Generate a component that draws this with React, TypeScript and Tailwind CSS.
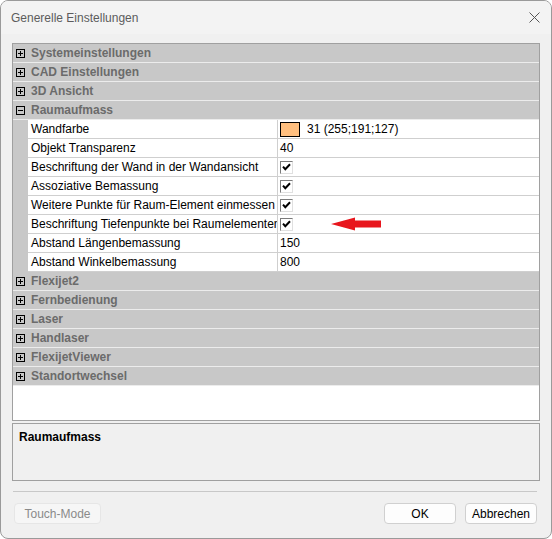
import React from "react";

const font = { fontFamily: '"Liberation Sans", Arial, sans-serif' };

function Toggle({ open }: { open?: boolean }) {
  return (
    <svg width="9" height="9" viewBox="0 0 9 9" className="shrink-0">
      <rect x="0.5" y="0.5" width="8" height="8" fill="none" stroke="#000" />
      <line x1="2" y1="4.5" x2="7" y2="4.5" stroke="#000" />
      {!open && <line x1="4.5" y1="2" x2="4.5" y2="7" stroke="#000" />}
    </svg>
  );
}

function Category({ label, open }: { label: string; open?: boolean }) {
  return (
    <div className="h-[19px] flex items-center bg-[#c8c8c8] border-b border-[#ececec] pl-[3px]">
      <Toggle open={open} />
      <span className="ml-[6px] text-[12px] font-bold text-[#6b6b6b] leading-none">{label}</span>
    </div>
  );
}

function CheckBox() {
  return (
    <div className="w-[13px] h-[13px] bg-white border-t border-l border-[#7a7a7a] border-r border-b border-r-[#e0e0e0] border-b-[#e0e0e0] flex items-center justify-center">
      <svg width="9" height="8" viewBox="0 0 9 8">
        <path d="M1 3.6 L3.3 6.2 L8 1.2" fill="none" stroke="#000" strokeWidth="2" />
      </svg>
    </div>
  );
}

function Prop({ name, children }: { name: string; children: React.ReactNode }) {
  return (
    <div className="h-[19px] flex">
      <div className="w-[15px] shrink-0 bg-[#c8c8c8]" />
      <div className="w-[250px] shrink-0 bg-white border-b border-r border-[#cfcfcf] pl-[3px] flex items-center overflow-hidden whitespace-nowrap text-[12px] text-black">
        {name}
      </div>
      <div className="flex-1 bg-white border-b border-[#cfcfcf] pl-[2px] flex items-center text-[12px] text-black">
        {children}
      </div>
    </div>
  );
}

export default function App() {
  return (
    <div className="w-[552px] h-[539px] bg-[#f0f0f0] border border-[#9a9a9a] rounded-[8px] overflow-hidden flex flex-col" style={font}>
      <div className="h-[33px] shrink-0 bg-[#f3f3f3] flex items-center justify-between pl-[10px] pr-[11px]">
        <span className="text-[12px] text-[#5c5c5c]">Generelle Einstellungen</span>
        <svg width="11" height="11" viewBox="0 0 11 11">
          <path d="M0.5 0.5 L10.5 10.5 M10.5 0.5 L0.5 10.5" stroke="#555" strokeWidth="1" />
        </svg>
      </div>

      <div className="mt-[9px] ml-[11px] mr-[11px] h-[378px] shrink-0 border border-[#a0a0a0] bg-white relative">
        <Category label="Systemeinstellungen" />
        <Category label="CAD Einstellungen" />
        <Category label="3D Ansicht" />
        <Category label="Raumaufmass" open />
        <Prop name="Wandfarbe">
          <div className="w-[20px] h-[15px] bg-[#ffbf7f] border border-black" />
          <span className="ml-[7px]">31 (255;191;127)</span>
        </Prop>
        <Prop name="Objekt Transparenz">40</Prop>
        <Prop name="Beschriftung der Wand in der Wandansicht">
          <CheckBox />
        </Prop>
        <Prop name="Assoziative Bemassung">
          <CheckBox />
        </Prop>
        <Prop name="Weitere Punkte für Raum-Element einmessen">
          <CheckBox />
        </Prop>
        <Prop name="Beschriftung Tiefenpunkte bei Raumelementen">
          <CheckBox />
        </Prop>
        <Prop name="Abstand Längenbemassung">150</Prop>
        <Prop name="Abstand Winkelbemassung">800</Prop>
        <Category label="Flexijet2" />
        <Category label="Fernbedienung" />
        <Category label="Laser" />
        <Category label="Handlaser" />
        <Category label="FlexijetViewer" />
        <Category label="Standortwechsel" />

        <svg className="absolute left-[318px] top-[173px]" width="50" height="14" viewBox="0 0 50 14">
          <polygon points="0,7 24,0.5 24,3.5 50,3.5 50,10.5 24,10.5 24,13.5" fill="#e8161d" />
        </svg>
      </div>

      <div className="mt-[2px] ml-[11px] mr-[11px] h-[58px] shrink-0 border border-[#a0a0a0] bg-[#f0f0f0] px-[6px] pt-0">
        <span className="text-[12px] font-bold text-black">Raumaufmass</span>
      </div>

      <div className="mt-[10px] ml-[12px] mr-[14px] h-px bg-[#c8c8c8]" />

      <div className="mt-[11px] ml-[13px] mr-[14px] flex items-center">
        <div className="w-[87px] h-[21px] rounded-[4px] bg-[#f6f6f6] border border-[#e6e6e6] flex items-center justify-center text-[12px] text-[#8a8a8a]">
          Touch-Mode
        </div>
        <div className="flex-1" />
        <div className="w-[72px] h-[21px] rounded-[4px] bg-[#fdfdfd] border border-[#d0d0d0] flex items-center justify-center text-[12px] text-black">
          OK
        </div>
        <div className="ml-[9px] w-[72px] h-[21px] rounded-[4px] bg-[#fdfdfd] border border-[#d0d0d0] flex items-center justify-center text-[12px] text-black">
          Abbrechen
        </div>
      </div>
    </div>
  );
}
